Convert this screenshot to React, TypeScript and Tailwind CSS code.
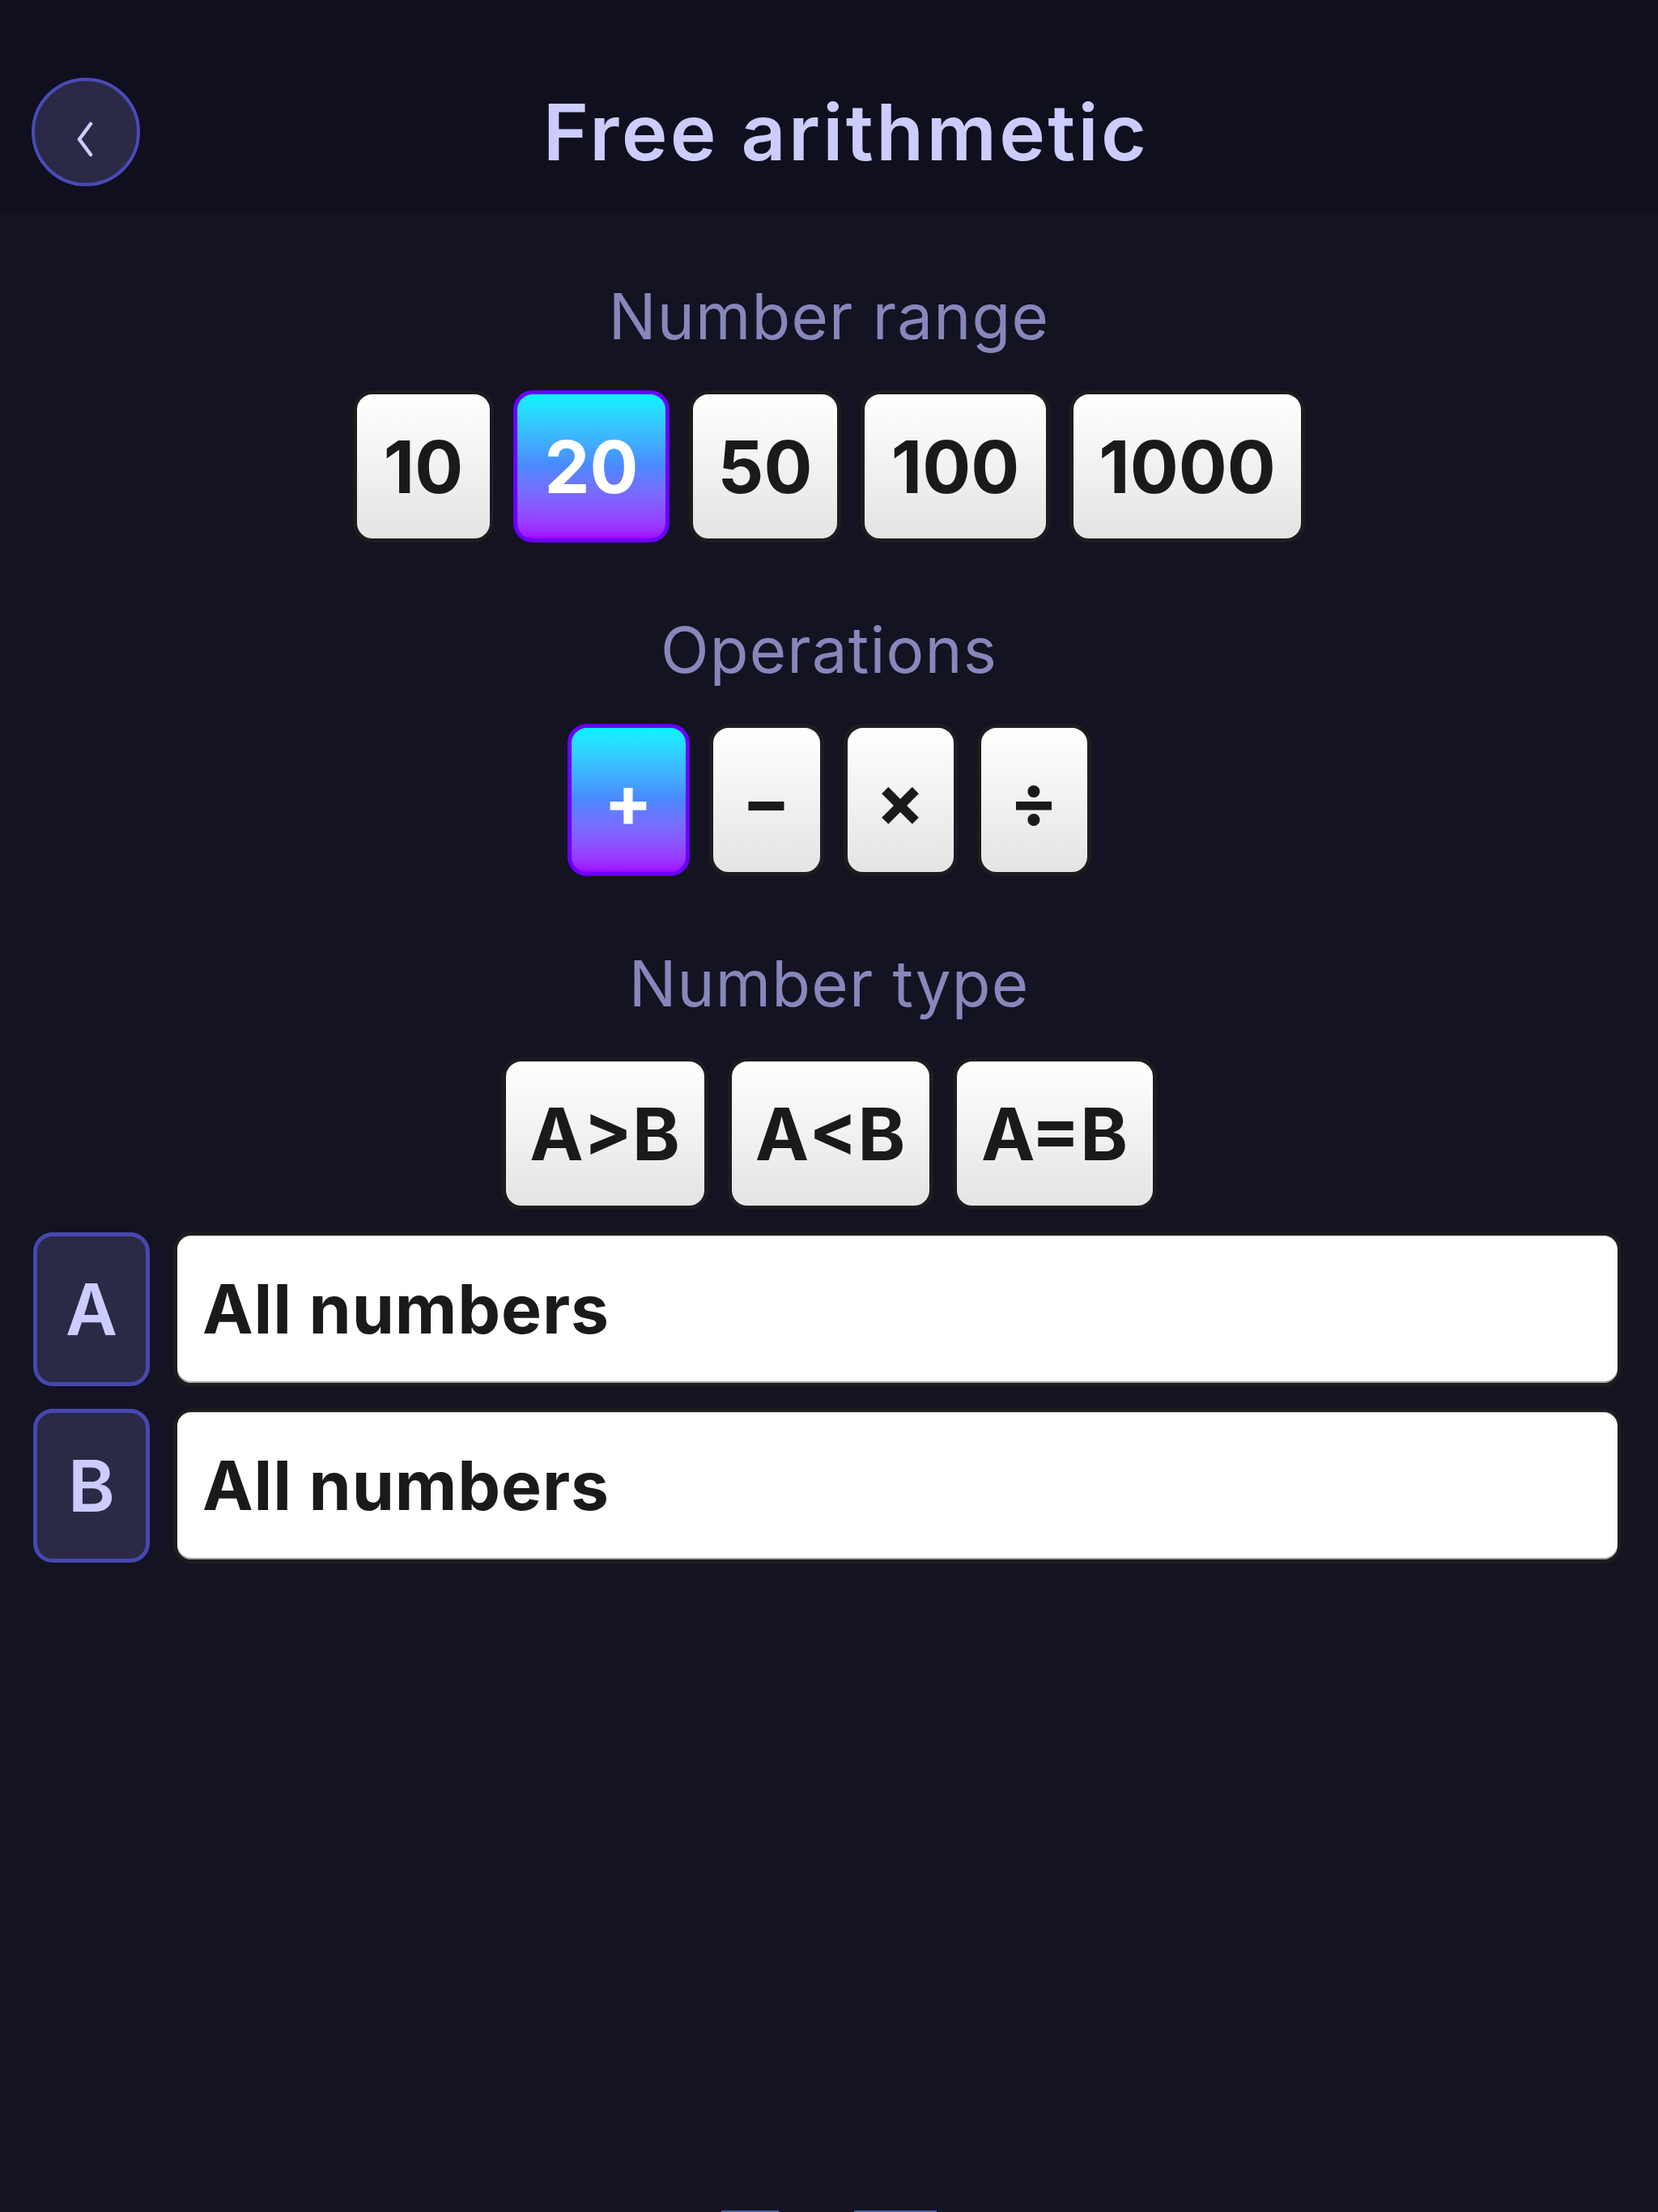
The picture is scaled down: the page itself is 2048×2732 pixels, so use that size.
import { useState } from "react";

type Choice = { label: string; width: string };

// Range options, each with the width of its key
const ranges: Choice[] = [
  { label: "10", width: "w-[174px]" },
  { label: "20", width: "w-[193px]" },
  { label: "50", width: "w-[188px]" },
  { label: "100", width: "w-[234px]" },
  { label: "1000", width: "w-[291px]" },
];

const operations: Choice[] = [
  { label: "+", width: "w-[151px]" },
  { label: "−", width: "w-[142px]" },
  { label: "×", width: "w-[141px]" },
  { label: "÷", width: "w-[141px]" },
];

const types: Choice[] = [
  { label: "A>B", width: "w-[255px]" },
  { label: "A<B", width: "w-[254px]" },
  { label: "A=B", width: "w-[252px]" },
];

const KeyButton = ({
  choice,
  active,
  onClick,
}: {
  choice: Choice;
  active: boolean;
  onClick: () => void;
}) => (
  <button
    type="button"
    onClick={onClick}
    className={`${choice.width} h-[188px] flex items-center justify-center rounded-[24px] border-[5px] text-[89px] font-bold leading-none ${
      active
        ? "border-[#6a00ff] bg-gradient-to-b from-[#00f4ff] via-[#4a88ff] to-[#a200ff] text-white"
        : "border-[#1d1d1f] bg-gradient-to-b from-white to-[#e4e4e4] text-[#1a1a1a]"
    }`}
  >
    {choice.label}
  </button>
);

const Section = ({
  title,
  items,
  selected,
  onSelect,
}: {
  title: string;
  items: Choice[];
  selected: number | null;
  onSelect: (i: number) => void;
}) => (
  <section className="flex flex-col items-center gap-[52px]">
    <h2 className="text-[78px] leading-none font-normal text-[#8787bc] tracking-[0.015em]">{title}</h2>
    <div className="flex justify-center gap-6">
      {items.map((c, i) => (
        <KeyButton key={c.label} choice={c} active={selected === i} onClick={() => onSelect(i)} />
      ))}
    </div>
  </section>
);

const OperandRow = ({ name, value }: { name: string; value: string }) => (
  <div className="flex items-center gap-[29px] pl-[41px] pr-[45px]">
    <div className="w-[144px] h-[190px] shrink-0 flex items-center justify-center rounded-[24px] border-[5px] border-[#4747b0] bg-[#2a2a47] text-[88px] font-semibold leading-none text-[#ccccff]">
      {name}
    </div>
    <div className="flex-1 h-[192px] flex items-center rounded-[22px] border-[5px] border-[#1d1d1f] bg-white pl-[31px] shadow-[inset_0_1px_0_#d4d4d4,inset_0_-2px_0_#a8a8a8] text-[84px] font-bold leading-none tracking-[0.01em] text-[#1a1a1a]">
      {value}
    </div>
  </div>
);

export default function App() {
  const [range, setRange] = useState(1);
  const [ops, setOps] = useState<number[]>([0]);
  const [type, setType] = useState<number | null>(null);

  return (
    <div className="h-[2732px] overflow-hidden flex flex-col bg-[#131322] font-['Inter','Noto_Sans',sans-serif]">
      {/* Top bar */}
      <header className="flex items-center bg-[#0f0f1e] pt-[96px] pb-[35px] pl-[39px] pr-[39px]">
        <button
          type="button"
          className="w-[134px] h-[134px] shrink-0 rounded-full border-[4px] border-[#4a4ab8] bg-[#2a2a47] flex items-center justify-center"
        >
          <svg width="24" height="44" viewBox="0 0 24 44" className="mt-[18px] -ml-[2px]">
            <polyline points="19,3 5,22 19,41" fill="none" stroke="#ccccff" strokeWidth="4.5" strokeLinecap="round" strokeLinejoin="round" />
          </svg>
        </button>
        <h1 className="flex-1 text-center text-[96px] font-semibold leading-none text-[#ccccff] tracking-[0.035em] pl-[42px]">
          Free arithmetic
        </h1>
        <div className="w-[134px] shrink-0" />
      </header>

      <main className="flex flex-col">
        <div className="flex flex-col gap-[94px] pt-[87px]">
          <Section title="Number range" items={ranges} selected={range} onSelect={setRange} />
          <Section
            title="Operations"
            items={operations}
            selected={ops[0] ?? null}
            onSelect={(i) => setOps([i])}
          />
          <Section title="Number type" items={types} selected={type} onSelect={setType} />
        </div>

        <div className="flex flex-col gap-[26px] mt-[27px]">
          <OperandRow name="A" value="All numbers" />
          <OperandRow name="B" value="All numbers" />
        </div>
      </main>

      <div className="flex-1" />
      {/* Tabs peeking in from below */}
      <div className="flex justify-center gap-[93px] h-[2px] shrink-0">
        <div className="w-[71px] bg-[#3d62ad]" />
        <div className="w-[102px] bg-[#3d62ad]" />
      </div>
    </div>
  );
}
